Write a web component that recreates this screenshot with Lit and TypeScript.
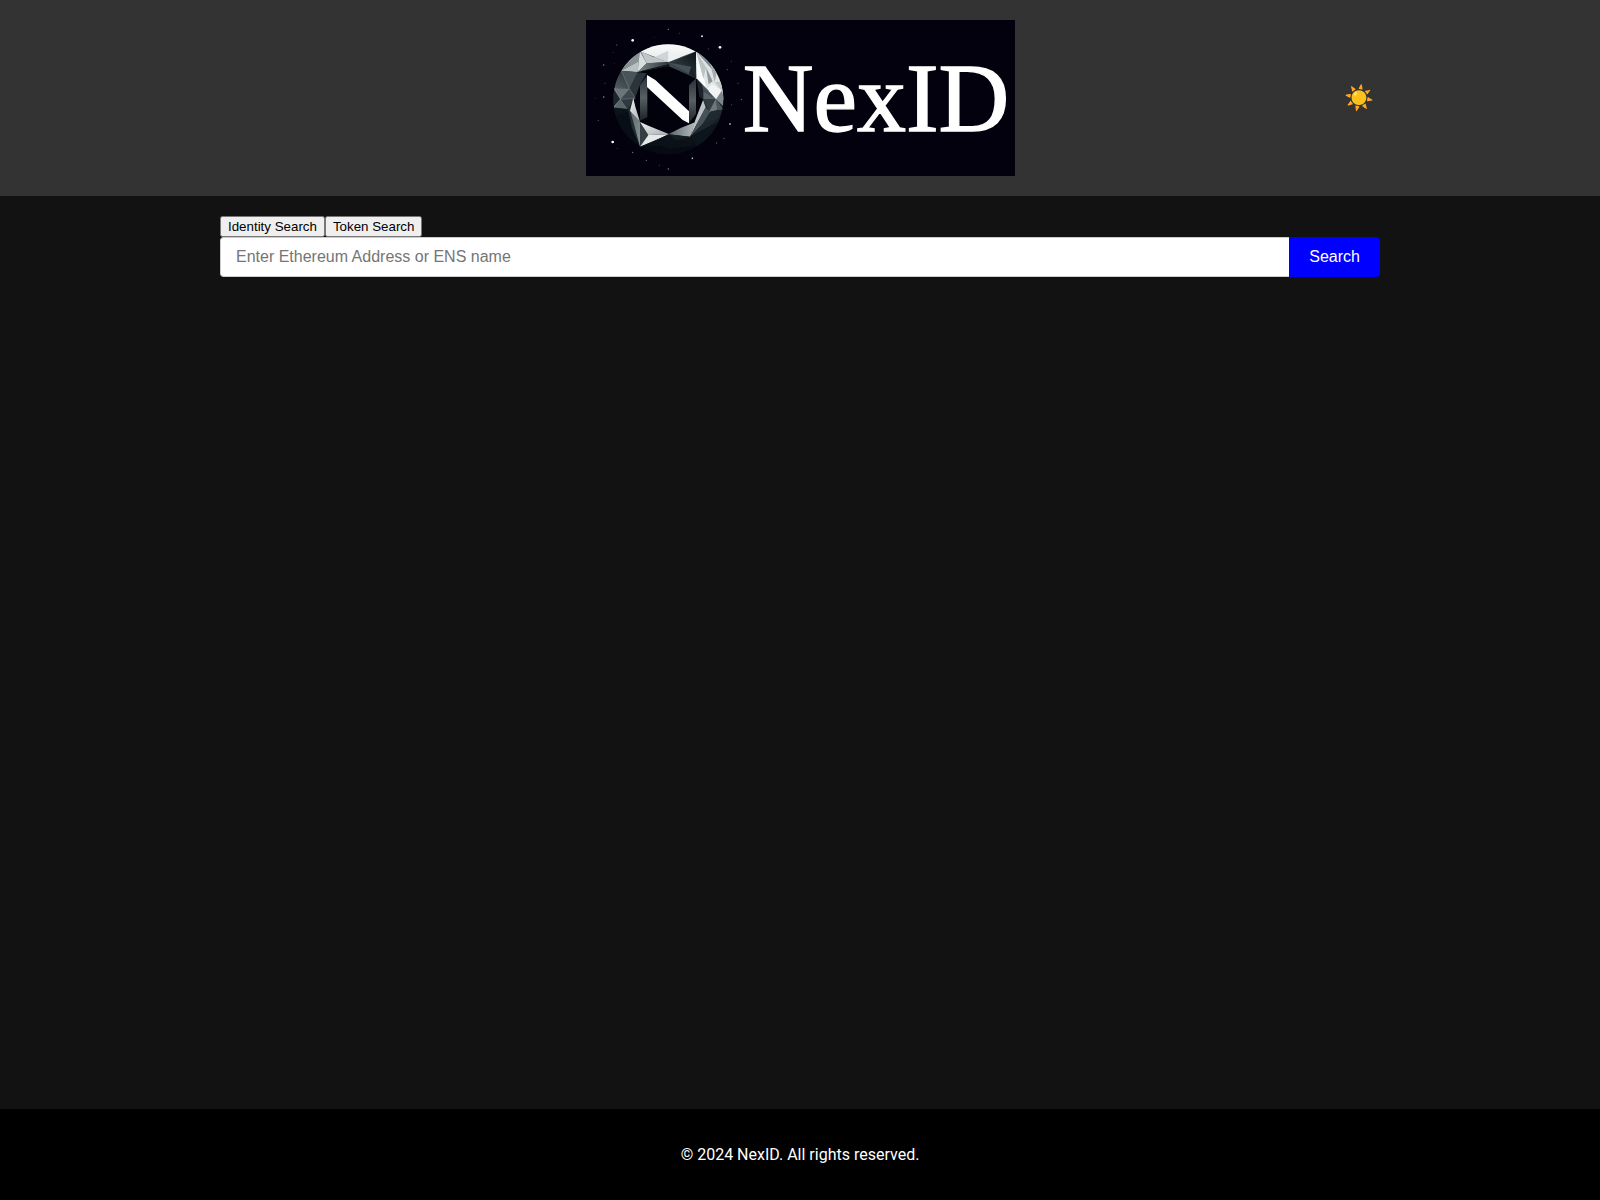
import { LitElement, html, css, svg } from "lit";
import { customElement, state } from "lit/decorators.js";

// Shading used by the facets: [id, x1, y1, x2, y2, from, to]
const SHADES: [string, number, number, number, number, string, string][] = [
  ["body", 0, 0, 0, 1, "#4a555a", "#05080f"],
  ["crown", 0, 0, 0, 1, "#ffffff", "#e6eaea"],
  ["under", 0, 0, 1, 0, "#7d878a", "#2a3439"],
  ["wing", 1, 0, 0, 1, "#0c1318", "#3f4a50"],
  ["west", 1, 0, 0, 1, "#1f282d", "#566166"],
  ["keel", 0, 0, 1, 1, "#59656b", "#8a9599"],
  ["glow", 0, 0, 1, 1, "#eef1f1", "#a7afb1"],
  ["spur", 0, 0, 1, 0, "#59646a", "#b4bbbd"],
];

// Facets of the gem: [fill, points], drawn back to front.
const FACETS: [string, string][] = [
  // crown
  ["url(#crown)", "180,124 215,100 265,90 320,100 348,124 264,156"],
  ["#cfd5d6", "265,122 265,156 222,142"],
  ["#eef1f1", "265,122 300,142 265,156"],
  ["#c0c7c8", "182,124 222,142 264,156 200,160"],
  ["#a3abad", "100,183 140,120 180,124 124,183"],
  ["#8a9497", "124,183 180,124 176,154"],
  ["#b9c0c1", "124,183 176,154 173,186"],
  ["#d8dddd", "180,124 200,160 173,186 176,154"],
  ["url(#under)", "173,186 200,160 264,156 268,162 228,172"],
  ["#0f161b", "173,186 228,172 268,162 268,168"],
  // upper right
  ["url(#wing)", "268,158 348,125 350,208"],
  ["#465157", "268,158 334,170 327,192"],
  ["#1b2328", "334,170 350,208 327,192"],
  ["#dfe3e3", "348,124 440,170 440,270 408,268 350,205"],
  ["#fafbfb", "348,124 366,180 380,236 350,205"],
  ["#7f8a8d", "348,124 385,142 398,180"],
  ["#bcc3c5", "348,124 378,172 370,206"],
  ["#8b9598", "378,172 398,214 386,222"],
  ["#a5adb0", "388,150 412,178 404,216"],
  ["#c3c9ca", "404,216 430,215 425,242"],
  ["#f1f4f4", "398,222 425,242 408,268 380,236"],
  // left side
  ["url(#west)", "96,183 124,183 173,187 148,236 100,234"],
  ["#48535a", "124,183 173,187 148,236"],
  ["#2a343a", "173,187 200,190 180,225 166,262 148,236"],
  ["#6b767b", "100,234 148,236 121,268"],
  ["#3e494f", "148,236 166,265 121,268"],
  ["#1d262c", "96,234 121,268 96,294"],
  ["#5a656a", "96,294 121,268 141,297"],
  ["#2f393f", "121,268 166,265 141,297"],
  ["#0c131a", "96,292 141,297 150,306 104,330"],
  // right side
  ["#1b242a", "350,207 386,242 370,268 358,262"],
  ["#465157", "366,224 408,268 370,244"],
  ["#59646a", "370,244 408,268 370,268"],
  ["#333e44", "370,268 408,268 388,306"],
  ["#7d888c", "408,268 425,242 432,262 432,290"],
  ["#4c575d", "408,268 432,300 412,300"],
  ["#6c777c", "408,268 412,300 388,306"],
  ["#1f292f", "388,306 432,298 410,328 366,344"],
  // lower left
  ["#080e15", "100,320 150,304 162,360 182,410 130,390"],
  ["#232d33", "144,299 150,304 180,410 156,354"],
  ["url(#keel)", "150,300 180,336 180,410"],
  ["url(#glow)", "160,264 166,290 180,335 150,302"],
  ["#333e45", "180,336 205,375 180,410"],
  ["url(#glow)", "180,336 205,347 268,373 205,375"],
  ["#e4e8e8", "180,410 205,375 268,373"],
  // lower right
  ["url(#spur)", "265,373 302,354 345,337 330,380"],
  ["#bcc3c4", "369,270 377,292 362,320 330,380 346,330"],
  ["#47525a", "377,292 390,306 366,344 330,380"],
  ["#1c262d", "366,344 412,328 386,350 330,380"],
  ["#0d151c", "330,380 386,350 420,334 390,384 350,408"],
  // pavilion
  ["#0b1118", "180,410 225,392 265,373 240,408"],
  ["#131b23", "265,373 330,380 290,392"],
  ["#0a1118", "265,373 290,392 350,408 265,416 240,408"],
  ["#060b12", "180,410 240,408 265,416 350,408 320,440 215,440"],
];

// Stars: [x, y, radius, colour]
const STARS: [number, number, number, string][] = [
  [158, 91, 4, "#fff"], [366, 79, 3, "#dde"], [420, 112, 4, "#fff"], [98, 396, 4, "#fff"],
  [265, 58, 2, "#889"], [298, 70, 1.5, "#556"], [110, 105, 2.5, "#445"], [100, 127, 1.5, "#445"],
  [71, 165, 2.5, "#778"], [103, 160, 1.5, "#334"], [75, 220, 2, "#445"], [71, 261, 2.5, "#889"],
  [55, 331, 2, "#556"], [45, 265, 1.5, "#334"], [112, 415, 1.5, "#445"], [158, 427, 2, "#889"],
  [199, 451, 2, "#778"], [238, 466, 1.5, "#556"], [265, 477, 2.5, "#778"], [337, 445, 2.5, "#ccd"],
  [410, 399, 2, "#556"], [432, 385, 2, "#667"], [450, 342, 3, "#99a"], [455, 284, 1.5, "#667"],
  [484, 268, 1.5, "#aab"], [474, 220, 2, "#556"], [442, 179, 2, "#556"], [454, 154, 1.5, "#556"],
  [385, 117, 2, "#445"], [223, 82, 1.5, "#334"],
];

@customElement("nexid-logo")
export class NexidLogo extends LitElement {
  static styles = css`
    :host { display: block; min-width: 0; }
    .logo { display: block; width: 429px; max-width: 100%; height: auto; }
    .word {
      font-family: "Liberation Serif", serif;
      font-size: 294px;
      fill: #fff;
      stroke: #fff;
      stroke-width: 4px;
    }
  `;

  render() {
    return html`
      <svg class="logo" viewBox="18 30 1287 468" role="img" aria-label="NexID">
        <defs>
          <clipPath id="gem"><circle cx="265" cy="268" r="165" /></clipPath>
          ${SHADES.map(([id, x1, y1, x2, y2, from, to]) => svg`
            <linearGradient id=${id} x1=${x1} y1=${y1} x2=${x2} y2=${y2}>
              <stop offset="0" stop-color=${from} />
              <stop offset="1" stop-color=${to} />
            </linearGradient>`)}
          <linearGradient id="bar" x1="0" y1="0" x2="0" y2="1">
            <stop offset="0" stop-color="#29323a" />
            <stop offset="0.5" stop-color="#565f63" />
            <stop offset="1" stop-color="#1b2328" />
          </linearGradient>
        </defs>
        <rect x="18" y="30" width="1287" height="468" fill="#02010d" />
        ${STARS.map(([x, y, r, c]) => svg`<circle cx=${x} cy=${y} r=${r} fill=${c} />`)}
        <g clip-path="url(#gem)">
          <circle cx="265" cy="268" r="165" fill="url(#body)" />
          <polygon fill="#02020c" points="173,186 265,168 350,206 366,240 370,270 348,338 265,373 180,336 160,270 180,220" />
          ${FACETS.map(([fill, points]) => svg`<polygon fill=${fill} points=${points} />`)}
          <path d="M124 183 148 236 121 268 141 297M148 236 166 265 121 268 103 234M408 268 388 306M121 268 100 294M366 224 408 268"
            fill="none" stroke="#a4adb0" stroke-width="2" opacity=".5" />
        </g>
        <polygon fill="url(#bar)" points="180,226 202,195 202,322 180,332" />
        <polygon fill="url(#bar)" points="327,226 348,205 348,312 327,340" />
        <polygon fill="#fff" points="201,195 226,210 327,304 327,340 308,330 201,231" />
        <text class="word" x="488" y="364">NexID</text>
      </svg>
    `;
  }
}

@customElement("app-root")
export class AppRoot extends LitElement {
  static styles = css`
    :host {
      display: flex;
      flex-direction: column;
      min-height: 100vh;
      background: #121212;
      color: #fff;
      font-family: Roboto, sans-serif;
      font-size: 16px;
    }
    .header { background: #333; padding: 20px; }
    .bar {
      display: grid;
      grid-template-columns: 1fr auto 1fr;
      align-items: center;
      max-width: 1160px;
      margin: 0 auto;
    }
    .brand { grid-column: 2; }
    .theme {
      justify-self: end;
      padding: 0 6px;
      border: 0;
      background: none;
      font-family: "Liberation Sans", sans-serif;
      font-size: 24px;
      color: #fff;
      cursor: pointer;
    }
    .main {
      flex: 1;
      box-sizing: border-box;
      width: 100%;
      max-width: 1200px;
      margin: 0 auto;
      padding: 20px;
    }
    .tabs { display: flex; }
    .tab { font-family: "Liberation Sans", Arial, sans-serif; }
    .search { display: flex; }
    .field {
      flex: 1;
      min-width: 0;
      padding: 10px 15px;
      border: 1px solid #ccc;
      border-right: 0;
      border-radius: 4px 0 0 4px;
      background: #fff;
      font-family: "Liberation Sans", Arial, sans-serif;
      font-size: 16px;
    }
    .submit {
      padding: 10px 20px;
      border: 0;
      border-radius: 0 4px 4px 0;
      background: #00f;
      color: #fff;
      font-family: "Liberation Sans", Arial, sans-serif;
      font-size: 16px;
      cursor: pointer;
    }
    .footer { background: #000; padding: 20px; text-align: center; }
    .copy { margin: 16px 0; line-height: 19px; }
  `;

  @state() private mode: "identity" | "token" = "identity";

  render() {
    const hint = this.mode === "identity"
      ? "Enter Ethereum Address or ENS name"
      : "Enter Token Address";
    return html`
      <header class="header">
        <div class="bar">
          <nexid-logo class="brand"></nexid-logo>
          <button class="theme" type="button" aria-label="Toggle theme">☀️</button>
        </div>
      </header>
      <main class="main">
        <div class="tabs">
          <button class="tab" type="button" @click=${() => (this.mode = "identity")}>Identity Search</button>
          <button class="tab" type="button" @click=${() => (this.mode = "token")}>Token Search</button>
        </div>
        <form class="search" @submit=${(e: Event) => e.preventDefault()}>
          <input class="field" type="text" aria-label=${hint} placeholder=${hint} />
          <button class="submit" type="submit">Search</button>
        </form>
      </main>
      <footer class="footer">
        <p class="copy">© 2024 NexID. All rights reserved.</p>
      </footer>
    `;
  }
}
